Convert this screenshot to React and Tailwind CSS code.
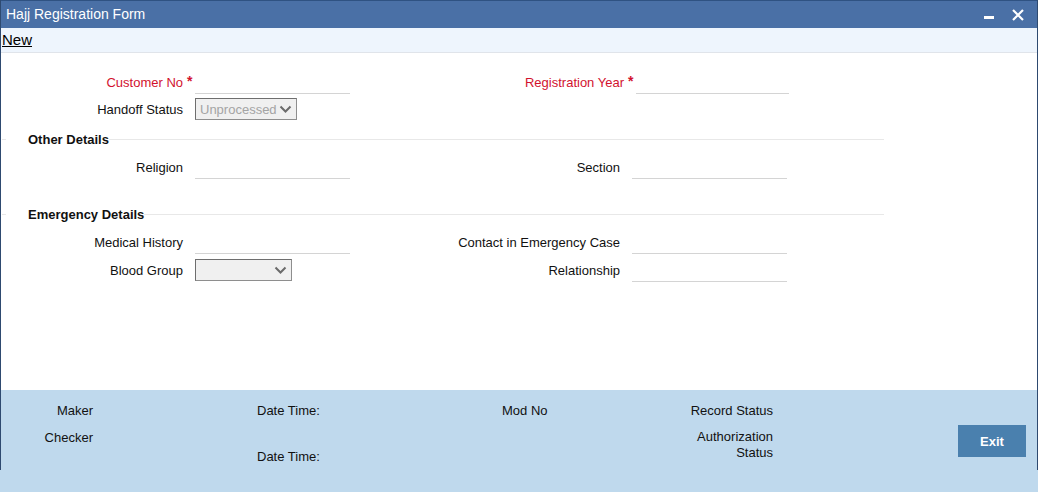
import React from "react";

const font = { fontFamily: '"Liberation Sans", Arial, sans-serif' };

function Chevron() {
  return (
    <svg width="13" height="9" viewBox="0 0 13 9" className="shrink-0">
      <path d="M1.5 1.5 L6.5 6.5 L11.5 1.5" fill="none" stroke="#6b6b6b" strokeWidth="2" />
    </svg>
  );
}

function Label({ children, required, width }) {
  return (
    <div className="flex items-center pt-[1px]" style={{ width }}>
      <span className={`flex-1 text-right text-[13px] ${required ? "text-[#d2122e]" : "text-[#111]"}`}>
        {children}
      </span>
      <span className="w-[12px] pl-[4px] text-[14px] font-bold text-[#d2122e] self-start leading-[16px]">
        {required ? "*" : ""}
      </span>
    </div>
  );
}

function Field({ width = 155 }) {
  return <div className="h-[24px] border-b border-[#d4d4d4]" style={{ width }} />;
}

function Select({ width, value }) {
  return (
    <div
      className="h-[22px] flex items-center justify-between border border-[#8e8e8e] border-t-[#6e6e6e] border-l-[#6e6e6e] bg-[#f0f0f0] pl-[4px] pr-[4px]"
      style={{ width }}
    >
      <span className="text-[13px] text-[#a4a4a4] leading-none">{value}</span>
      <Chevron />
    </div>
  );
}

function Heading({ children }) {
  return (
    <div className="flex items-center h-[18px] w-[882px]">
      <div className="w-[4px] border-t border-[#e8e8e8]" />
      <span className="ml-[22px] pt-[1px] text-[13px] font-bold text-[#111]">{children}</span>
      <div className="flex-1 border-t border-[#e8e8e8]" />
    </div>
  );
}

export default function App() {
  return (
    <div className="w-[1038px] h-[492px] bg-white relative overflow-hidden" style={font}>
      <div className="h-[470px] border-l border-r border-[#2e4a70] absolute inset-x-0 top-0 pointer-events-none z-10" />
      {/* title bar */}
      <div className="h-[28px] bg-[#4a70a6] border-t border-[#2f5282] flex items-center justify-between pl-[6px] pr-[14px]">
        <span className="text-white text-[14px]">Hajj Registration Form</span>
        <div className="flex items-center gap-[18px]">
          <div className="w-[10px] h-[3px] bg-white mt-[6px]" />
          <svg width="12" height="12" viewBox="0 0 12 12">
            <path d="M1 1 L11 11 M11 1 L1 11" stroke="white" strokeWidth="2.2" />
          </svg>
        </div>
      </div>
      {/* toolbar */}
      <div className="h-[25px] bg-[#eef5fd] border-b border-[#e0e4ea] flex items-center pl-[2px]">
        <span className="text-[15px] underline text-black">New</span>
      </div>

      {/* form */}
      <div className="h-[337px] pl-[2px] pt-[17px]">
        <div className="flex items-center">
          <div className="flex items-center w-[348px]">
            <Label required width={193}>Customer No</Label>
            <Field />
          </div>
          <div className="flex items-center">
            <Label required width={286}>Registration Year</Label>
            <Field width={153} />
          </div>
        </div>
        <div className="flex items-center h-[24px] mt-[3px]">
          <Label width={193}>Handoff Status</Label>
          <Select width={102} value="Unprocessed" />
        </div>

        <div className="mt-[9px]">
          <Heading>Other Details</Heading>
        </div>
        <div className="flex items-center mt-[7px]">
          <div className="flex items-center w-[348px]">
            <Label width={193}>Religion</Label>
            <Field />
          </div>
          <div className="flex items-center">
            <Label width={282}>Section</Label>
            <Field />
          </div>
        </div>

        <div className="mt-[26px]">
          <Heading>Emergency Details</Heading>
        </div>
        <div className="flex items-center mt-[7px]">
          <div className="flex items-center w-[348px]">
            <Label width={193}>Medical History</Label>
            <Field />
          </div>
          <div className="flex items-center">
            <Label width={282}>Contact in Emergency Case</Label>
            <Field />
          </div>
        </div>
        <div className="flex items-center mt-[4px]">
          <div className="flex items-center w-[348px]">
            <div className="flex items-center h-[24px]">
              <Label width={193}>Blood Group</Label>
              <Select width={97} value="" />
            </div>
          </div>
          <div className="flex items-center">
            <Label width={282}>Relationship</Label>
            <Field />
          </div>
        </div>
      </div>

      {/* footer */}
      <div className="h-[102px] bg-[#bfd9ed] relative text-[13px] leading-[15px] text-[#111]">
        <div className="flex pt-[13px]">
          <div className="w-[93px] flex flex-col items-end gap-[12px]">
            <span>Maker</span>
            <span>Checker</span>
          </div>
          <div className="ml-[164px] w-[245px] flex flex-col gap-[31px]">
            <span>Date Time:</span>
            <span>Date Time:</span>
          </div>
          <div className="w-[120px]">
            <span>Mod No</span>
          </div>
          <div className="w-[151px] flex flex-col items-end text-right leading-[16px] gap-[11px]">
            <span className="leading-[15px]">Record Status</span>
            <span>Authorization<br />Status</span>
          </div>
          <div className="ml-[185px] mt-[22px]">
            <button className="w-[68px] h-[32px] bg-[#4a80ae] text-white font-bold text-[13px]">Exit</button>
          </div>
        </div>
      </div>
    </div>
  );
}
